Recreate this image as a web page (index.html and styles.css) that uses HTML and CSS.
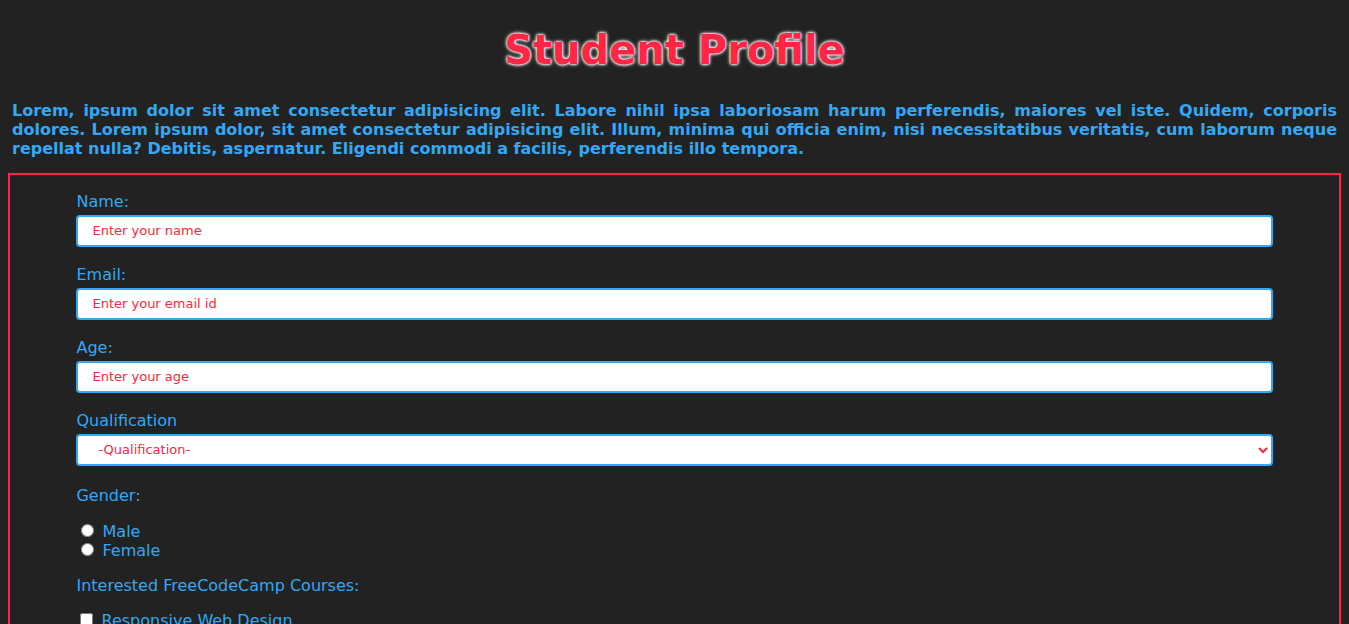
FILE: index.html
```html
<!DOCTYPE html>
<html lang="en">
<head>
    <meta charset="UTF-8">
    <meta name="viewport" content="width=device-width, initial-scale=1.0">
    <title>Student Profile</title>
    <link rel="stylesheet" href="styles.css">
</head>
<body>

    <h1 class="title">Student Profile</h1>

    <p class="intro">Lorem, ipsum dolor sit amet consectetur adipisicing elit. Labore nihil ipsa laboriosam harum perferendis, maiores vel iste. Quidem, corporis dolores. Lorem ipsum dolor, sit amet consectetur adipisicing elit. Illum, minima qui officia enim, nisi necessitatibus veritatis, cum laborum neque repellat nulla? Debitis, aspernatur. Eligendi commodi a facilis, perferendis illo tempora.</p>

    <!-- Survey form -->
    <div class="form-box">
        <form class="survey">
            <div class="field">
                <label for="name">Name:</label>
                <input type="text" id="name" placeholder="Enter your name">
            </div>
            <div class="field">
                <label for="email">Email:</label>
                <input type="email" id="email" placeholder="Enter your email id">
            </div>
            <div class="field">
                <label for="age">Age:</label>
                <input type="number" id="age" placeholder="Enter your age">
            </div>
            <div class="field field-select">
                <label for="qualification">Qualification</label>
                <select id="qualification">
                    <option>-Qualification-</option>
                    <option>High School</option>
                    <option>Graduate</option>
                    <option>Post Graduate</option>
                </select>
            </div>

            <div class="group">
                <p class="group-title">Gender:</p>
                <label class="option"><input type="radio" name="gender" value="male"> Male</label>
                <label class="option"><input type="radio" name="gender" value="female"> Female</label>
            </div>

            <div class="group">
                <p class="group-title courses">Interested FreeCodeCamp Courses:</p>
                <label class="option"><input type="checkbox" value="rwd"> Responsive Web Design</label>
                <label class="option"><input type="checkbox" value="js"> JavaScript Algorithms and Data Structures</label>
                <label class="option"><input type="checkbox" value="fe"> Front End Libraries</label>
            </div>
        </form>
    </div>

</body>
</html>
```

FILE: styles.css
```css
/* Base */
body {
    margin: 8px;
    background-color: #222222;
    font-family: "DejaVu Sans", Verdana, sans-serif;
    color: #33a8f5;
}
/* Heading */
.title {
    margin: 19px 0 28px;
    font-size: 40px;
    text-align: center;
    color: #ff2545;
    text-shadow: 0 0 2px #ffffff, 0 0 3px #ffffff, 0 0 4px #ffffff;
}
/* Intro text */
.intro {
    margin: 28px 0 14px;
    padding: 0 4px;
    font-size: 16px;
    font-weight: bold;
    line-height: 19.2px;
    text-align: justify;
}
/* Form box */
.form-box {
    border: 2px solid #ff2545;
    padding-top: 17px;
}
.survey {
    width: 90%;
    margin: 0 auto;
}
.field label {
    display: block;
    font-size: 16px;
    line-height: 19px;
    margin-bottom: 4px;
}
.field input,
.field select {
    display: block;
    box-sizing: border-box;
    width: 100%;
    height: 32px;
    margin-bottom: 18px;
    padding: 0 14px;
    border: 2px solid #33a8f5;
    border-radius: 4px;
    background: #ffffff;
    font-family: "DejaVu Sans", Verdana, sans-serif;
    font-size: 13px;
    color: #ff2545;
    outline: none;
}
.field input::placeholder {
    color: #ff2545;
}
.field-select select {
    margin-bottom: 20px;
    padding: 0 16px;
}
/* Radio and checkbox groups */
.group-title {
    margin: 0 0 17px;
    font-size: 16px;
    line-height: 19px;
}
.group-title.courses {
    margin-bottom: 16px;
}
.group {
    margin-bottom: 16px;
}
.option {
    display: block;
    font-size: 16px;
    line-height: 19px;
}
.option input {
    margin-top: 0;
    margin-bottom: 0;
}
```
